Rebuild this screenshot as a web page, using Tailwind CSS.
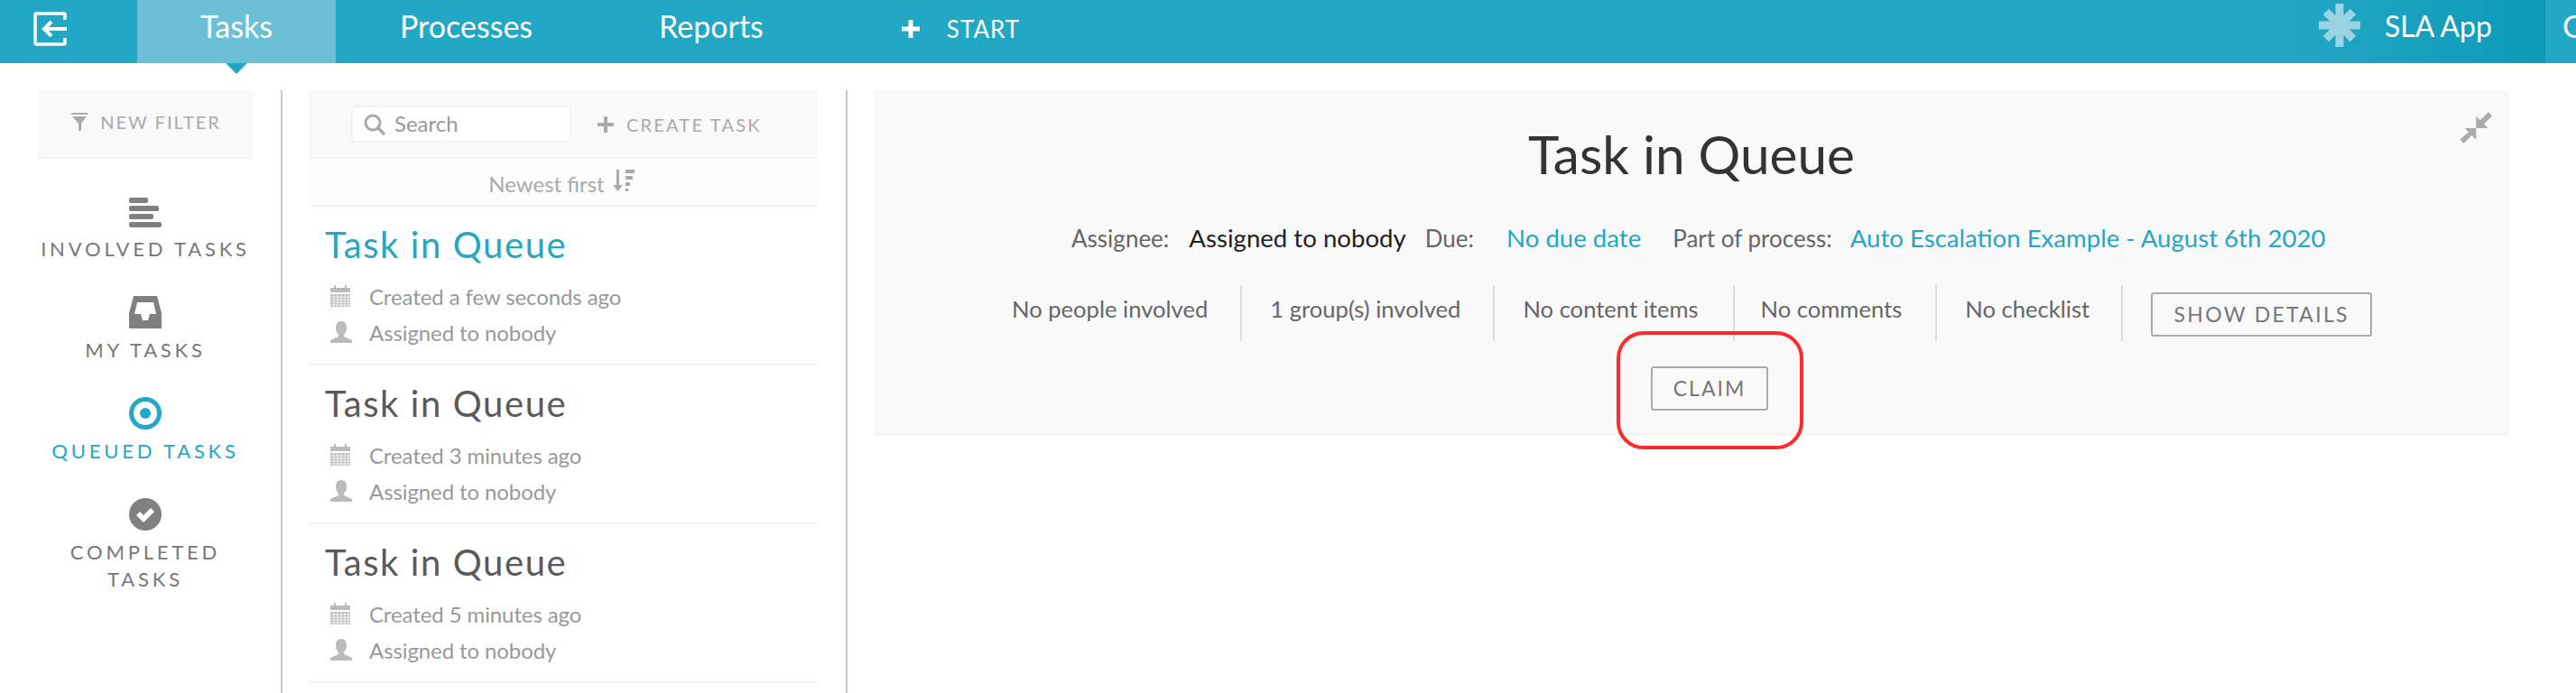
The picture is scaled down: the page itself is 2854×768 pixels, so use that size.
<!DOCTYPE html>
<html lang="en">
<head>
    <meta charset="UTF-8">
    <title>Tasks</title>
    <script src="https://cdn.jsdelivr.net/npm/@tailwindcss/browser@4"></script>
</head>
<body class="bg-white font-['Lato',sans-serif] overflow-hidden">
<div class="relative w-[2854px] h-[768px] overflow-hidden">

    <!-- Top bar -->
    <header class="relative flex h-[70px] bg-[#22a7c4] text-white text-[34px] leading-[58px] whitespace-nowrap">
        <div class="w-[152px] flex items-center pl-[37px]">
            <svg class="mb-[6px]" width="38" height="38" viewBox="0 0 38 38" fill="none" stroke="#fff" stroke-width="3.500"><path d="M35 9V3.500a1.500 1.500 0 0 0-1.500-1.500H3.500a1.500 1.500 0 0 0-1.500 1.500v31A1.500 1.500 0 0 0 3.500 36h30a1.500 1.500 0 0 0 1.500-1.500V29"/><path d="M37 19H12M20 11l-8 8 8 8" stroke-width="4"/></svg>
        </div>
        <div class="relative w-[220px] bg-[#6dbfd5] text-center">
            Tasks
            <div class="absolute left-[98px] top-[70px] w-0 h-0 border-x-[12px] border-x-transparent border-t-[12px] border-t-[#22a7c4]"></div>
        </div>
        <div class="ml-[71px]">Processes</div>
        <div class="ml-[140px]">Reports</div>
        <div class="ml-[153px] flex items-center pb-[6px]">
            <svg width="20" height="20" viewBox="0 0 20 20" fill="#fff"><path d="M7.500 0h5v7.500H20v5h-7.500V20h-5v-7.500H0v-5h7.500z"/></svg>
            <span class="ml-[30px] text-[26px] tracking-[1px]">START</span>
        </div>
        <div class="ml-auto flex w-[289px] pl-[38px] text-[32px] bg-linear-to-r from-[#22a7c4] to-[#0b9ab9] border-r-2 border-r-[#1c8fab]">
            <svg class="mt-[4px]" width="46" height="48" viewBox="0 0 46 48" stroke="#9cd3e2" stroke-width="9"><path d="M23 0v48M0 24h46M8 9l30 30M38 9L8 39"/></svg>
            <span class="ml-[27px]">SLA App</span>
        </div>
        <div class="ml-[19px] w-[15px]">G</div>
    </header>

    <div class="flex h-[698px] pt-[30px]">
        <!-- Filters -->
        <aside class="w-[238px] ml-[42px] text-[#777] text-[22px] leading-[30px] tracking-[3.800px] text-center">
            <div class="h-[76px] bg-[#f9f9f9] border-b-2 border-[#f3f3f3] flex items-center justify-center text-[#aaa] text-[20px] tracking-[2px] pb-[4px] pl-[2px]">
                <svg class="mr-[14px]" width="18" height="20" viewBox="0 0 18 20" fill="#aaa"><path d="M0 0h18v2H0zM1 4h16l-6 8v8H8v-8z"/></svg>
                NEW FILTER
            </div>
            <div class="h-[112px] pt-[43px]">
                <svg class="mx-auto" width="36" height="33" viewBox="0 0 36 33" fill="#808080"><rect width="21" height="6" rx="2"/><rect y="9" width="33" height="6" rx="2"/><rect y="18" width="27" height="6" rx="2"/><rect y="27" width="36" height="6" rx="2"/></svg>
                <div class="mt-[9px] whitespace-nowrap">INVOLVED TASKS</div>
            </div>
            <div class="h-[112px] pt-[40px]">
                <svg class="mx-auto" width="36" height="36" viewBox="0 0 36 36" fill="#808080"><path fill-rule="evenodd" d="M5 0h26l5 19v17H0V19zM9 7L6 20h7l2 7h6l2-7h7l-3-13z"/></svg>
                <div class="mt-[9px]">MY TASKS</div>
            </div>
            <div class="h-[112px] pt-[40px] text-[#22a7c4]">
                <svg class="mx-auto" width="36" height="36" viewBox="0 0 36 36"><circle cx="18" cy="18" r="15.500" fill="none" stroke="#22a7c4" stroke-width="5"/><circle cx="18" cy="18" r="6" fill="#22a7c4"/></svg>
                <div class="mt-[9px] whitespace-nowrap">QUEUED TASKS</div>
            </div>
            <div class="pt-[40px]">
                <svg class="mx-auto" width="36" height="36" viewBox="0 0 36 36"><circle cx="18" cy="18" r="18" fill="#808080"/><path d="M8 19l4-4 4 4 8-8 4 4-12 12z" fill="#fff"/></svg>
                <div class="mt-[9px] px-[30px]">COMPLETED TASKS</div>
            </div>
        </aside>

        <!-- Task list -->
        <section class="ml-[31px] pl-[29px] w-[626px] border-l-2 border-[#c8c8c8] h-full">
            <div class="w-[564px] h-[76px] bg-[#f9f9f9] border-b-2 border-[#f3f3f3] flex items-start text-[#aaa]">
                <div class="mt-[17px] ml-[47px] w-[244px] h-[41px] bg-white rounded-[6px] border-2 border-[#f3f3f3] flex items-center pl-[12px]">
                    <svg width="24" height="24" viewBox="0 0 24 24" fill="none" stroke="#aaa" stroke-width="3"><circle cx="10" cy="10" r="8"/><path d="M16 16l7 7" stroke-width="3.500"/></svg>
                    <span class="ml-[10px] mb-[2px] text-[24px] text-[#999]">Search</span>
                </div>
                <div class="ml-[29px] mt-[26px] flex items-center text-[20px] leading-[24px] tracking-[2.200px]">
                    <svg width="18" height="18" viewBox="0 0 18 18" fill="#aaa"><path d="M7 0h4v7h7v4h-7v7H7v-7H0V7h7z"/></svg>
                    <span class="ml-[14px] whitespace-nowrap">CREATE TASK</span>
                </div>
            </div>
            <div class="w-[564px] h-[53px] bg-[#fcfcfc] border-b-2 border-[#f3f3f3] flex items-center justify-center text-[24px] text-[#aaa] pt-[4px] pr-[4px]">
                Newest first
                <svg class="ml-[9px] mb-[8px]" width="24" height="24" viewBox="0 0 24 24" fill="#aaa"><path d="M4 0h3v17h4l-5.500 7L0 17h4zM14 0h10v4H14zM14 7h8v4h-8zM14 14h5v4h-5zM14 21h3v3h-3z"/></svg>
            </div>

            <div class="w-[564px] h-[176px] border-b-2 border-[#f5f5f5] pl-[18px]">
                <div class="pt-[18px] text-[40px] leading-[48px] tracking-[1.600px] text-[#22a7c4]">Task in Queue</div>
                <div class="mt-[14px] flex items-center h-[40px] text-[24px] tracking-[-0.100px] text-[#999]">
                    <svg class="mx-[6px] mb-[2px]" width="22" height="24" viewBox="0 0 22 24" fill="#bbb"><path d="M0 3h4V0h2v3h10V0h2v3h4v5H0zM0 10h22v14H0z"/><path d="M4 10v14M8 10v14M12 10v14M16 10v14M20 10v14M0 13h22M0 16h22M0 19h22M0 22h22" stroke="#f4f4f4" stroke-width="1"/></svg>
                    <span class="ml-[15px]">Created a few seconds ago</span>
                </div>
                <div class="flex items-center h-[40px] text-[24px] tracking-[-0.100px] text-[#999]">
                    <svg class="mx-[6px] mb-[2px]" width="24" height="24" viewBox="0 0 24 24" fill="#bbb"><path d="M12 0c4 0 6 3 6 7 0 3-1 6-3 8v2l9 4v3H0v-3l9-4v-2C7 13 6 10 6 7c0-4 2-7 6-7z"/></svg>
                    <span class="ml-[13px]">Assigned to nobody</span>
                </div>
            </div>
            <div class="w-[564px] h-[176px] border-b-2 border-[#f5f5f5] pl-[18px]">
                <div class="pt-[18px] text-[40px] leading-[48px] tracking-[1.600px] text-[#5a5a5a]">Task in Queue</div>
                <div class="mt-[14px] flex items-center h-[40px] text-[24px] tracking-[-0.100px] text-[#999]">
                    <svg class="mx-[6px] mb-[2px]" width="22" height="24" viewBox="0 0 22 24" fill="#bbb"><path d="M0 3h4V0h2v3h10V0h2v3h4v5H0zM0 10h22v14H0z"/><path d="M4 10v14M8 10v14M12 10v14M16 10v14M20 10v14M0 13h22M0 16h22M0 19h22M0 22h22" stroke="#f4f4f4" stroke-width="1"/></svg>
                    <span class="ml-[15px]">Created 3 minutes ago</span>
                </div>
                <div class="flex items-center h-[40px] text-[24px] tracking-[-0.100px] text-[#999]">
                    <svg class="mx-[6px] mb-[2px]" width="24" height="24" viewBox="0 0 24 24" fill="#bbb"><path d="M12 0c4 0 6 3 6 7 0 3-1 6-3 8v2l9 4v3H0v-3l9-4v-2C7 13 6 10 6 7c0-4 2-7 6-7z"/></svg>
                    <span class="ml-[13px]">Assigned to nobody</span>
                </div>
            </div>
            <div class="w-[564px] h-[176px] border-b-2 border-[#f5f5f5] pl-[18px]">
                <div class="pt-[18px] text-[40px] leading-[48px] tracking-[1.600px] text-[#5a5a5a]">Task in Queue</div>
                <div class="mt-[14px] flex items-center h-[40px] text-[24px] tracking-[-0.100px] text-[#999]">
                    <svg class="mx-[6px] mb-[2px]" width="22" height="24" viewBox="0 0 22 24" fill="#bbb"><path d="M0 3h4V0h2v3h10V0h2v3h4v5H0zM0 10h22v14H0z"/><path d="M4 10v14M8 10v14M12 10v14M16 10v14M20 10v14M0 13h22M0 16h22M0 19h22M0 22h22" stroke="#f4f4f4" stroke-width="1"/></svg>
                    <span class="ml-[15px]">Created 5 minutes ago</span>
                </div>
                <div class="flex items-center h-[40px] text-[24px] tracking-[-0.100px] text-[#999]">
                    <svg class="mx-[6px] mb-[2px]" width="24" height="24" viewBox="0 0 24 24" fill="#bbb"><path d="M12 0c4 0 6 3 6 7 0 3-1 6-3 8v2l9 4v3H0v-3l9-4v-2C7 13 6 10 6 7c0-4 2-7 6-7z"/></svg>
                    <span class="ml-[13px]">Assigned to nobody</span>
                </div>
            </div>
        </section>

        <!-- Task detail -->
        <main class="pl-[29px] border-l-2 border-[#c8c8c8] h-full">
            <div class="relative w-[1812px] h-[382px] bg-[#f9f9f9] border-b-2 border-[#f3f3f3]">
                <svg class="absolute right-[19px] top-[23px]" width="36" height="37" viewBox="0 0 36 37" fill="#aaa"><path d="M18.300 5.700V19H31.600L27 14.500 36 5.500 32 1.200 22.800 10.200zM18.300 19H5.700L10 23.500 0.500 31.500 4.500 36 13.500 27 18.300 32z"/></svg>
                <h1 class="pt-[34px] text-center text-[58.500px] leading-[72px] text-[#333]">Task in Queue</h1>
                <div class="mt-[40px] h-[36px] flex items-baseline pl-[219px] text-[26px] leading-[36px] text-[#666] whitespace-nowrap">
                    <span>Assignee:</span>
                    <span class="ml-[22px] text-[27.600px] text-[#222]">Assigned to nobody</span>
                    <span class="ml-[21px]">Due:</span>
                    <span class="ml-[36px] text-[27.600px] text-[#22a7c4]">No due date</span>
                    <span class="ml-[35px]">Part of process:</span>
                    <span class="ml-[20px] text-[27.600px] text-[#22a7c4]">Auto Escalation Example - August 6th 2020</span>
                </div>
                <div class="mt-[34px] flex pl-[122px] text-[25.600px] text-[#666] leading-[52px] whitespace-nowrap">
                    <div class="h-[62px] pl-[31px] pr-[36px] border-r-2 border-[#ddd]">No people involved</div>
                    <div class="h-[62px] pl-[31px] pr-[36px] border-r-2 border-[#ddd]">1 group(s) involved</div>
                    <div class="h-[62px] pl-[31px] pr-[38px] border-r-2 border-[#ddd]">No content items</div>
                    <div class="h-[62px] pl-[29px] pr-[37px] border-r-2 border-[#ddd]">No comments</div>
                    <div class="h-[62px] pl-[31px] pr-[35px] border-r-2 border-[#ddd]">No checklist</div>
                    <button class="ml-[31px] mt-[8px] w-[245px] h-[49px] border-2 border-[#aaa] rounded-[3px] text-[23px] leading-[45px] tracking-[2.300px] text-[#777]">SHOW DETAILS</button>
                </div>
                <div class="mt-[28px] flex justify-center pl-[40px]">
                    <button class="w-[130px] h-[49px] border-2 border-[#aaa] rounded-[3px] text-[23px] leading-[45px] tracking-[2px] text-[#777]">CLAIM</button>
                </div>
            </div>
        </main>
    </div>

    <!-- Red annotation drawn over the screenshot -->
    <div class="absolute left-[1791px] top-[367px] w-[207px] h-[131px] border-4 border-[#ff2a2a] rounded-[30px]"></div>
</div>
</body>
</html>
